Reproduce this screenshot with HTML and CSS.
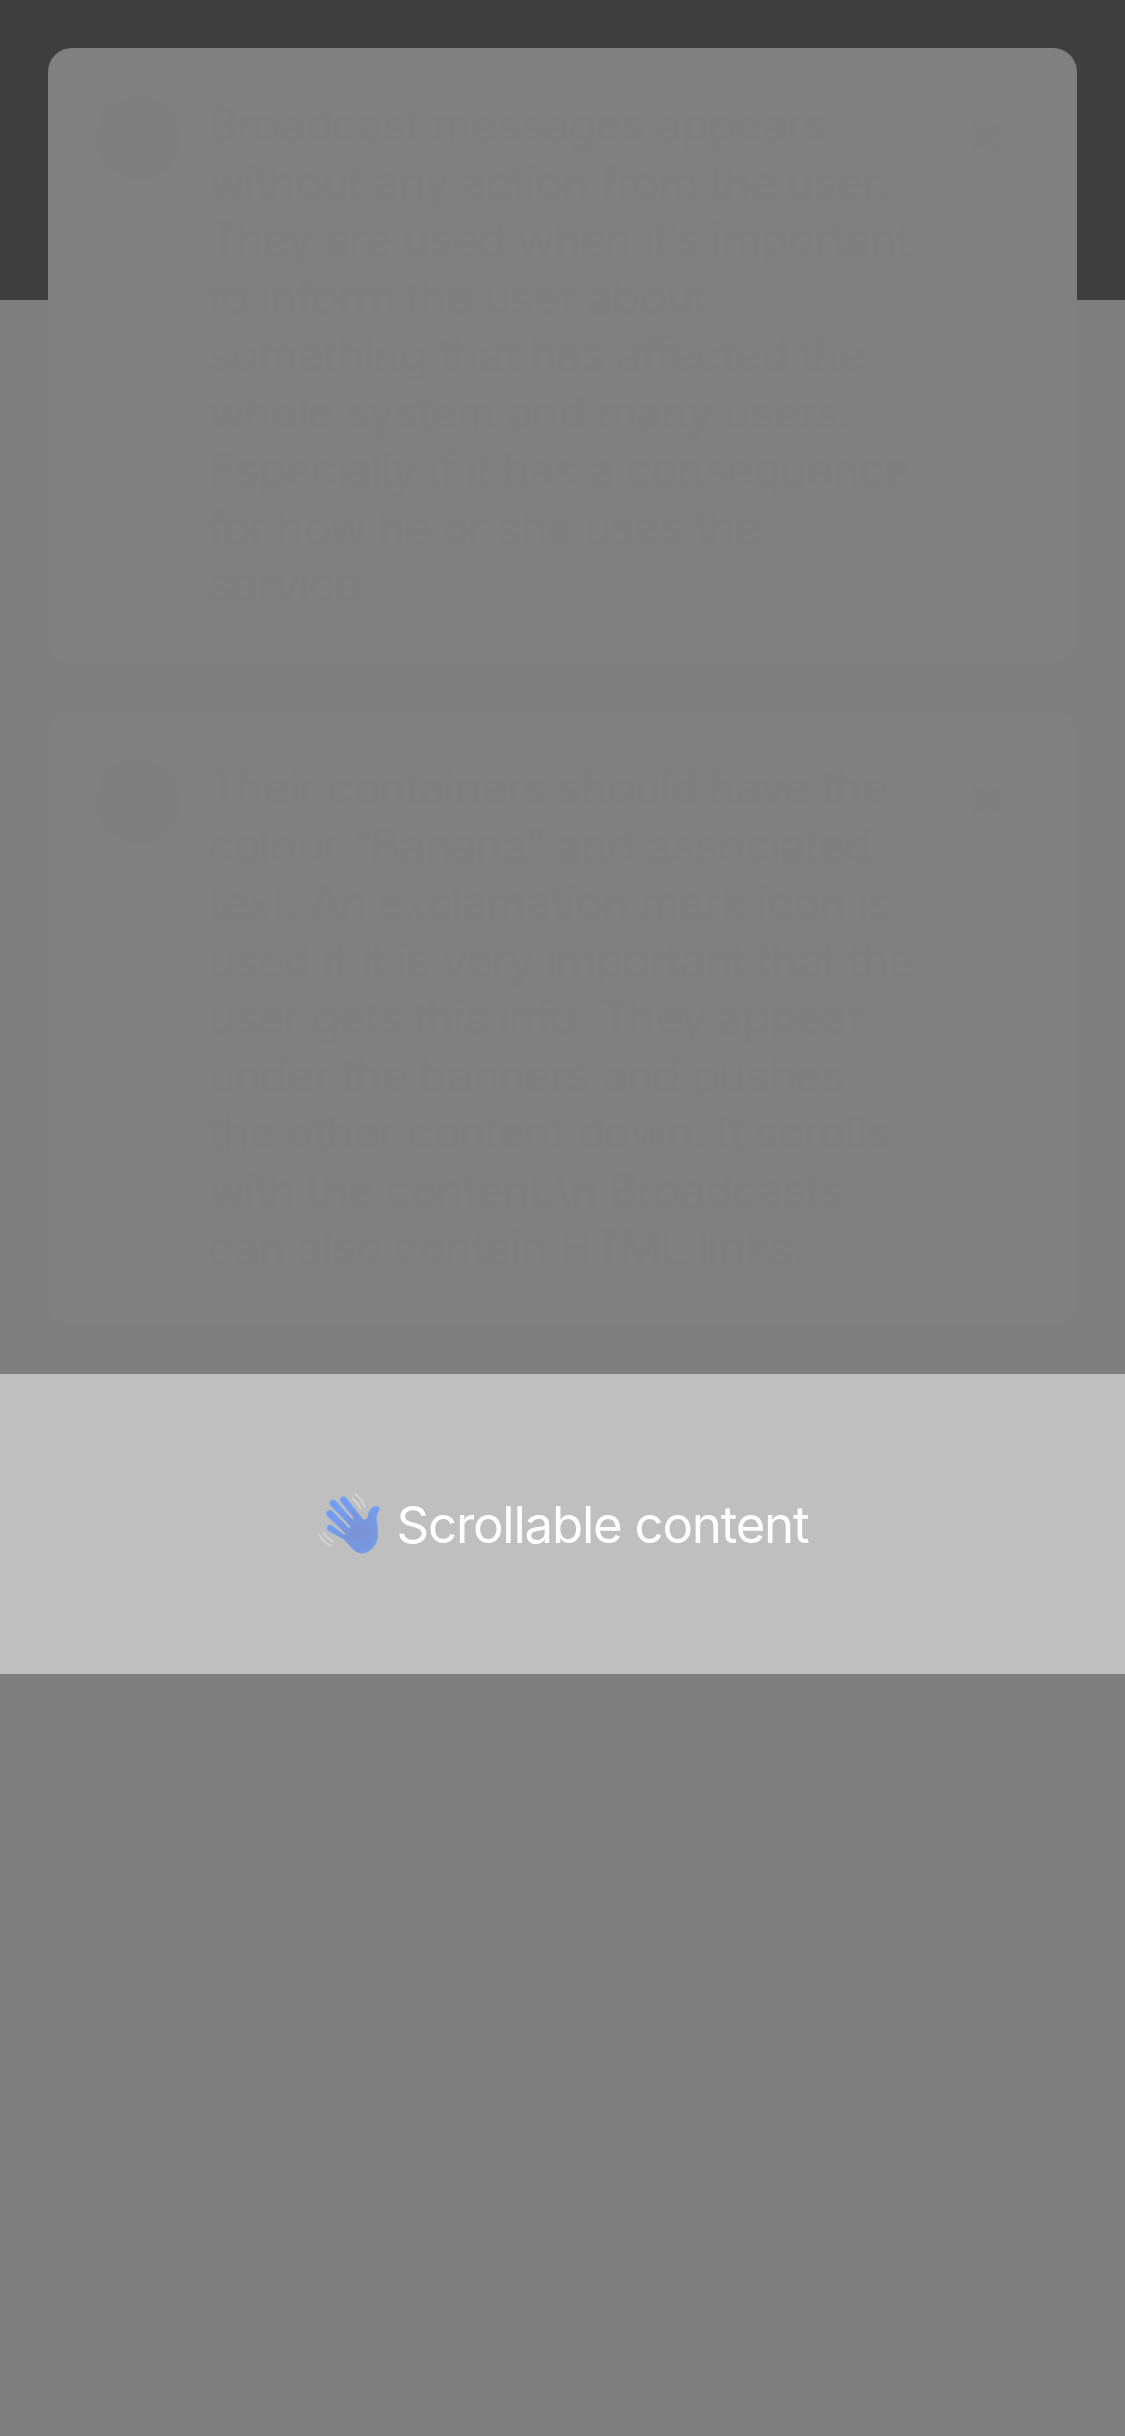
FILE: index.html
```html
<!DOCTYPE html>
<html lang="en">
<head>
<meta charset="utf-8">
<title>Broadcast messages</title>
<link rel="stylesheet" href="styles.css">
</head>
<body>
<main class="screen">
  <section class="broadcasts">
    <article class="card">
      <span class="badge"></span>
      <p class="message">Broadcast messages appears<br>without any action from the user.<br>They are used when it’s important<br>to inform the user about<br>something that has affected the<br>whole system and many users.<br>Especially if it has a consequence<br>for how he or she uses the<br>service.</p>
      <svg class="close" viewBox="0 0 30 30"><path d="M3 3L27 27M27 3L3 27"/></svg>
    </article>
    <article class="card">
      <span class="badge"></span>
      <p class="message">Their containers should have the<br>colour “Banana” and associated<br>text. An exclamation mark icon is<br>used if it is very important that the<br>user gets this info. They appear<br>under the banners and pushes<br>the other content down. It scrolls<br>with the content.\n Broadcasts<br>can also contain HTML links.</p>
      <svg class="close" viewBox="0 0 30 30"><path d="M3 3L27 27M27 3L3 27"/></svg>
    </article>
  </section>
  <section class="content">
    <svg class="wave" viewBox="48 0 216 270">
      <defs>
        <radialGradient id="palm" gradientUnits="userSpaceOnUse" cx="175" cy="160" r="85">
          <stop offset="0" stop-color="#7b90d2"/>
          <stop offset=".6" stop-color="#7897e0"/>
          <stop offset="1" stop-color="#739df0"/>
        </radialGradient>
      </defs>
      <path class="hand" fill="url(#palm)" d="M129 181L83 155C73 148 80 135 91 139L127 166C131 169 135 164 131 160L80 112C70 101 82 88 94 97L141 145C146 149 151 145 147 140L90 80C80 69 93 57 104 66L151 119C155 124 161 120 157 115L120 68C113 56 127 48 136 58L184 119C190 126 198 122 200 115C203 101 207 88 218 84C227 80 237 84 235 93C230 101 225 108 226 120C228 141 232 158 229 179C225 199 211 215 192 221C174 226 158 215 147 200Z"/>
      <g class="motion">
        <path d="M154 58Q170 69 178 89M164 46Q184 60 191 85"/>
        <path d="M68 161Q78 180 97 187M55 167Q67 191 89 201"/>
      </g>
    </svg>
    <span class="label">Scrollable content</span>
  </section>
</main>
</body>
</html>
```
FILE: styles.css
```css
body {
  margin: 0;
  background: #7f7f7f;
  font-family: Inter, "Liberation Sans", sans-serif;
}

.screen {
  min-height: 2436px;
}

.broadcasts {
  display: flex;
  flex-direction: column;
  gap: 48px;
  padding: 48px;
  background: linear-gradient(#3f3f3f 300px, #7f7f7f 300px);
}

.card {
  box-sizing: border-box;
  height: 615px;
  display: flex;
  align-items: flex-start;
  padding: 48px;
  border-radius: 24px;
  background: #808080;
}

.badge {
  width: 84px;
  height: 84px;
  margin-right: 28px;
  flex: none;
  border-radius: 50%;
  background: #7f7f7f;
}

.message {
  margin: 0;
  flex: 1;
  font-size: 46px;
  line-height: 57.5px;
  letter-spacing: -1px;
  white-space: nowrap;
  color: #7f7f7f;
}

.close {
  width: 30px;
  height: 30px;
  margin: 26px 27px 0 0;
  flex: none;
  fill: none;
  stroke: #7f7f7f;
  stroke-width: 6;
  stroke-linecap: round;
}

.content {
  height: 300px;
  display: flex;
  align-items: center;
  justify-content: center;
  gap: 8px;
  background: #bfbfbf;
}

.wave {
  width: 72px;
  height: 90px;
}

.hand {
  stroke: #73a1f4;
  stroke-width: 2;
  stroke-linejoin: round;
}

.motion {
  fill: none;
  stroke: #d7d7d7;
  stroke-width: 5;
  stroke-linecap: round;
}

.label {
  font-size: 51px;
  line-height: 61px;
  letter-spacing: -1.25px;
  white-space: nowrap;
  color: #fff;
}
```
